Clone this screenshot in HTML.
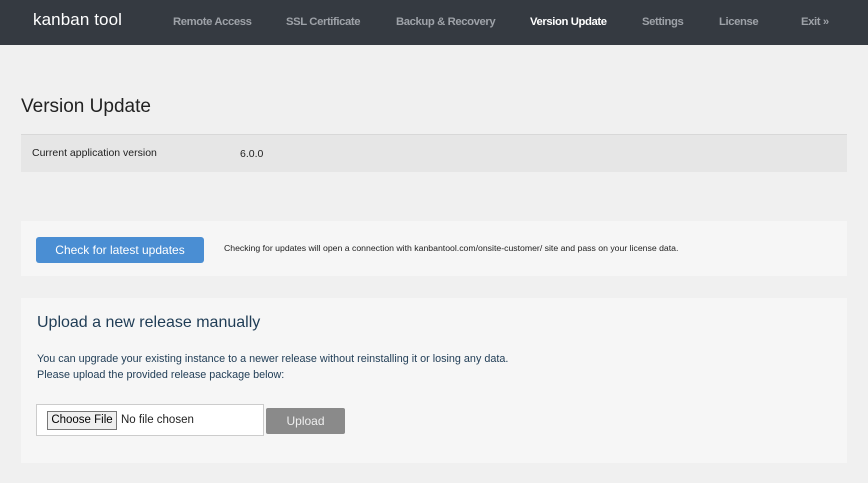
<!DOCTYPE html>
<html><head><meta charset="utf-8"><style>
*{margin:0;padding:0;box-sizing:border-box}
body{width:868px;height:483px;overflow:hidden;background:#f0f0f0;font-family:"Liberation Sans",Arial,sans-serif;position:relative}
.nav{height:45px;background:#353a41;position:relative}
.nav .logo{position:absolute;left:33px;top:10px;color:#fff;font-size:17px;letter-spacing:0.1px}
.nav a{position:absolute;top:16px;color:#9ea2a8;font-size:11.3px;font-weight:bold;letter-spacing:-0.4px;text-decoration:none}
.nav a.act{color:#fff}
h1{position:absolute;left:21px;top:96px;font-size:19px;font-weight:normal;color:#222}
.row{position:absolute;left:21px;top:134px;width:826px;height:38px;background:#e6e6e6;border-top:1px solid #d8d8d8;font-size:10.5px;color:#222}
.panel{position:absolute;left:21px;width:826px;background:#f6f6f6}
.btn{position:absolute;left:15px;top:16px;width:168px;height:26px;background:#4a8ed3;border-radius:3px;color:#fff;font-size:12px;text-align:center;line-height:26px}
</style></head><body>
<div class="nav">
<div class="logo">kanban tool</div>
<a style="left:173px">Remote Access</a>
<a style="left:286px">SSL Certificate</a>
<a style="left:396px">Backup &amp; Recovery</a>
<a class="act" style="left:530px">Version Update</a>
<a style="left:642px">Settings</a>
<a style="left:719px">License</a>
<a style="left:801px">Exit »</a>
</div>
<h1>Version Update</h1>
<div class="row"><span style="position:absolute;left:11px;top:12px">Current application version</span><span style="position:absolute;left:219px;top:13px">6.0.0</span></div>
<div class="panel" style="top:221px;height:55px">
<div class="btn">Check for latest updates</div>
<span style="position:absolute;left:203px;top:22px;font-size:8.7px;color:#222">Checking for updates will open a connection with kanbantool.com/onsite-customer/ site and pass on your license data.</span>
</div>
<div class="panel" style="top:298px;height:165px">
<div style="position:absolute;left:16px;top:16px;font-size:16px;color:#1f3c55">Upload a new release manually</div>
<div style="position:absolute;left:16px;top:53px;font-size:10.8px;color:#1f3c55;line-height:16px">You can upgrade your existing instance to a newer release without reinstalling it or losing any data.<br>Please upload the provided release package below:</div>
<div style="position:absolute;left:15px;top:106px;width:228px;height:32px;background:#fff;border:1px solid #ccc">
<span style="position:absolute;left:10px;top:6px;width:70px;height:19px;border:1px solid #777;background:#efefef;font-size:11.5px;text-align:center;line-height:17px;color:#000">Choose File</span>
<span style="position:absolute;left:84px;top:9px;font-size:11.5px;color:#222">No file chosen</span></div>
<div style="position:absolute;left:245px;top:110px;width:79px;height:26px;background:#8a8a8a;border-radius:2px;color:#eee;font-size:12px;text-align:center;line-height:26px">Upload</div>
</div>
</body></html>
